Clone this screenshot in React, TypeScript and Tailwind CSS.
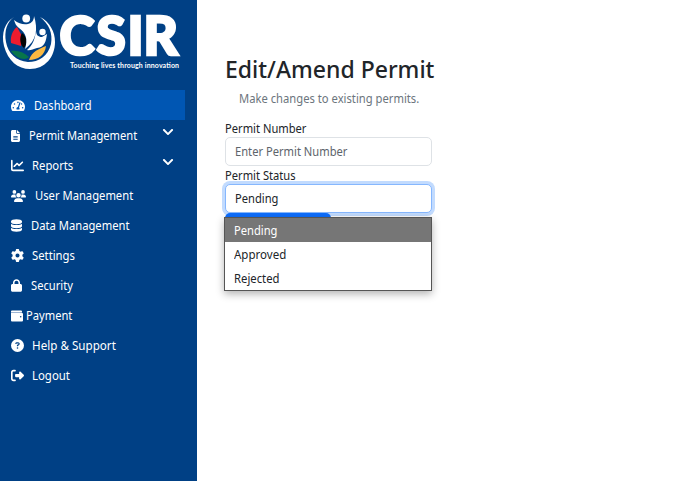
import React from "react";
import { FaTachometerAlt, FaChevronDown } from "react-icons/fa";
import {
  FaFileLines, FaChartLine, FaUsers, FaDatabase, FaGear, FaLock,
  FaCircleQuestion, FaRightFromBracket,
} from "react-icons/fa6";

type IconProps = { className?: string };
type Item = { label: string; Icon: React.ComponentType<IconProps>; icon: string; text: string; active?: boolean; menu?: boolean };

function Wallet({ className }: IconProps) {
  return (
    <svg viewBox="0 0 12 12" className={className} fill="currentColor">
      <path d="M1 .5H10Q11 .5 11 1.500V2.500H0V1.500Q0 .5 1 .5ZM0 3H11Q12 3 12 4V10.500Q12 11.500 11 11.500H1Q0 11.500 0 10.500Z" />
      <path d="M0 2.300H10.500V3H0Z" fill="#a9bdd9" />
      <circle cx="9.700" cy="6.800" r=".8" fill="#004085" />
    </svg>
  );
}

const items: Item[] = [
  { label: "Dashboard", Icon: FaTachometerAlt, icon: "w-[14px] h-[13px]", text: "ml-[9px] scale-x-[0.925]", active: true },
  { label: "Permit Management", Icon: FaFileLines, icon: "w-[9px] h-3", text: "ml-[9px] scale-x-[0.93]", menu: true },
  { label: "Reports", Icon: FaChartLine, icon: "w-[13px] h-[13px]", text: "ml-[8px] scale-x-[0.94]", menu: true },
  { label: "User Management", Icon: FaUsers, icon: "w-[15px] h-3", text: "ml-[9px] scale-x-[0.935]" },
  { label: "Data Management", Icon: FaDatabase, icon: "w-[11px] h-[13px]", text: "ml-[9px] scale-x-[0.935]" },
  { label: "Settings", Icon: FaGear, icon: "w-[13px] h-[13px]", text: "ml-[8px] scale-x-[0.94]" },
  { label: "Security", Icon: FaLock, icon: "w-[11px] h-[13px]", text: "ml-[9px] scale-x-[0.93]" },
  { label: "Payment", Icon: Wallet, icon: "w-3 h-3", text: "ml-[3px] scale-x-[0.93]" },
  { label: "Help & Support", Icon: FaCircleQuestion, icon: "w-[13px] h-[13px]", text: "ml-[8px] scale-x-[0.97]" },
  { label: "Logout", Icon: FaRightFromBracket, icon: "w-[13px] h-[13px]", text: "ml-[8px] scale-x-[0.95]" },
];

function Logo() {
  return (
    <svg viewBox="0 0 197 90" className="block h-[90px] w-[197px]" aria-label="CSIR">
      <path d="M14 17C5 22 1 33 4 46C8 61 18 69 30 69C45 69 55 57 55 42C55 32 50 22 40 17C49 24 53 33 51 44C48 56 39 62 28 62C16 61 8 53 6 42C4 31 7 22 14 17Z" fill="#fff" />
      <path d="M17 27C13 30 10 36 11 43L21 46L22 36Z" fill="#ee1c2e" />
      <path d="M22 33C27 37 28 43 24 48C20 45 19 38 22 33Z" fill="#050505" />
      <path d="M11 51C18 50 23 52 29 57C25 61 17 59 11 51Z" fill="#08764a" />
      <path d="M29 60C32 51 39 49 46 46C45 55 38 60 29 60Z" fill="#fbb941" />
      <circle cx="26.200" cy="18.500" r="3.900" fill="#fff" />
      <path d="M14 20C19 24 24 25 28 24C32 23 34 20 34 16C38 29 37 40 25 49C28 39 26 33 19 28C16 26 15 23 14 20Z" fill="#fff" />
      <circle cx="42.500" cy="32" r="3.200" fill="#fff" />
      <path d="M36 30C36 35 38 37 42 37L47 34C46 41 45 47 37 48C33 49 30 51 27 50C33 45 35 39 36 30Z" fill="#fff" />
      <text x="59.500 96.500 127.500 143.500" y="54.500" fill="#fff" stroke="#fff" strokeWidth="2.600" className="font-['Lato'] text-[53px] font-black">CSIR</text>
      <text x="70" y="67.500" textLength="109" lengthAdjust="spacing" fill="#fff" className="font-['Lato'] text-[7px] font-bold">Touching lives through innovation</text>
    </svg>
  );
}

export default function App() {
  return (
    <div className="flex h-[481px] w-[694px] overflow-hidden bg-white font-['Noto_Sans','Open_Sans',sans-serif] text-[12px] text-[#212529]">
      <aside className="w-[197px] shrink-0 bg-[#004085] text-white">
        <Logo />
        <nav>
          {items.map(({ label, Icon, icon, text, active, menu }) => (
            <div key={label} className={`flex h-[30px] w-[185px] items-center pl-[11px] pr-[11px] pt-px ${active ? "bg-[#0056b3]" : ""}`}>
              <Icon className={`shrink-0 ${icon}`} />
              <span className={`origin-left whitespace-nowrap ${text}`}>{label}</span>
              {menu && <FaChevronDown className="mb-[8px] ml-auto h-3 w-3" />}
            </div>
          ))}
        </nav>
      </aside>
      <main className="ml-7 w-[207px] pt-[53px]">
        <h1 className="whitespace-nowrap text-[23px] font-medium leading-[33px]">Edit/Amend Permit</h1>
        <p className="ml-[14px] mt-[4px] origin-left scale-x-[0.935] whitespace-nowrap leading-[18px] text-[#6c757d]">Make changes to existing permits.</p>
        <label className="mt-3 block origin-left scale-x-[0.93] leading-[17px]">Permit Number</label>
        <div className="flex h-[29px] items-center rounded-[5px] border border-[#dee2e6] px-[9px] pt-px text-[#5d646b]"><span className="origin-left scale-x-[0.93]">Enter Permit Number</span></div>
        <label className="mt-[1px] block origin-left scale-x-[0.93] leading-[17px]">Permit Status</label>
        <div className="relative">
          <div className="relative z-10 flex h-[29px] items-center rounded-[5px] border border-[#86b7fe] bg-white px-[9px] pt-px shadow-[0_0_0_3px_#c2dbfe]"><span className="origin-left scale-x-[0.93]">Pending</span></div>
          <div className="relative z-20 h-[29px] w-[106px] rounded-[5px] bg-[#0d6efd]" />
          <div className="absolute left-[-1px] top-[33px] z-30 w-[208px] border border-[#555] bg-white shadow-[0_3px_8px_rgba(0,0,0,0.3)]">
            <div className="h-6 bg-[#767676] px-[9px] pt-px leading-6 text-white"><span className="block origin-left scale-x-[0.93]">Pending</span></div>
            <div className="h-6 px-[9px] pt-px leading-6"><span className="block origin-left scale-x-[0.96]">Approved</span></div>
            <div className="h-6 px-[9px] pt-px leading-6"><span className="block origin-left scale-x-[0.94]">Rejected</span></div>
          </div>
        </div>
      </main>
    </div>
  );
}
